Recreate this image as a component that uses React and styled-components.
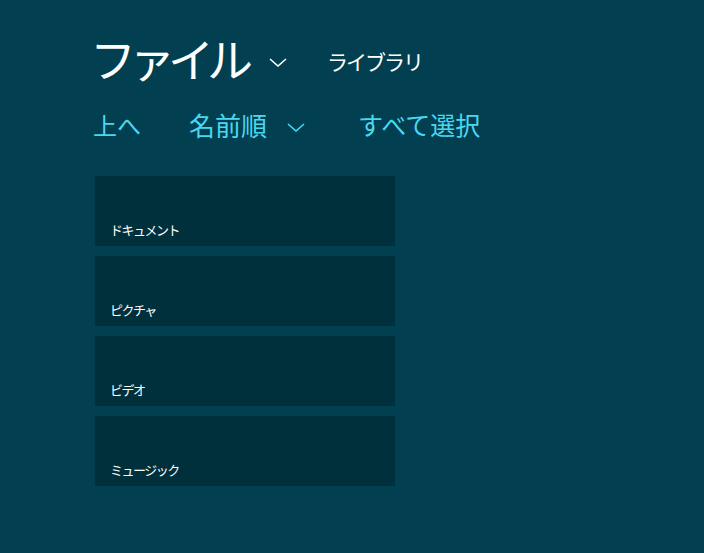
import React from "react";
import styled, { createGlobalStyle } from "styled-components";

const Global = createGlobalStyle`
  html, body { margin: 0; padding: 0; background: #013f51; }
  body { font-family: "Noto Sans CJK JP", "Noto Sans", sans-serif; }
`;

const Page = styled.div`
  width: 704px;
  height: 553px;
  box-sizing: border-box;
  background: #013f51;
  padding: 22px 0 0 93px;
  color: #fff;
`;

const Header = styled.div`
  display: flex;
  align-items: center;
  height: 70px;
`;

const Title = styled.h1`
  margin: 0 0 0 -3px;
  font-size: 46px;
  font-weight: 400;
  letter-spacing: -7px;
  line-height: 1;
  color: #fff;
`;

const Chevron = ({ size = 18, color = "#fff", stroke = 1.6 }) => (
  <svg width={size} height={size / 2} viewBox="0 0 18 9" fill="none">
    <path d="M1 1 L9 8 L17 1" stroke={color} strokeWidth={stroke} />
  </svg>
);

const TitleChevron = styled.span`
  display: flex;
  margin-left: 23px;
  margin-top: 10px;
`;

const Sub = styled.span`
  margin-left: 40px;
  margin-top: 8px;
  font-size: 21px;
  font-weight: 400;
  letter-spacing: -2px;
`;

const Nav = styled.div`
  display: flex;
  align-items: center;
  margin-top: 14px;
  height: 36px;
`;

const NavItem = styled.span`
  display: flex;
  align-items: center;
  font-size: ${(p) => p.$size || 24}px;
  font-weight: 400;
  color: #4bd8ef;
  margin-left: ${(p) => p.$offset || 0}px;
`;

const NavChevron = styled.span`
  display: flex;
  margin-left: 20px;
  margin-top: 6px;
`;

const Tiles = styled.div`
  display: flex;
  flex-direction: column;
  gap: 10px;
  margin-top: 34px;
  margin-left: 2px;
`;

const Tile = styled.div`
  width: 300px;
  height: 70px;
  box-sizing: border-box;
  background: #01303d;
  display: flex;
  align-items: flex-end;
  padding: 0 0 7px 15px;
  font-size: 13px;
  color: #fff;
  letter-spacing: -1.5px;
`;

const tiles = ["ドキュメント", "ピクチャ", "ビデオ", "ミュージック"];

export default function App() {
  return (
    <>
      <Global />
      <Page>
        <Header>
          <Title>ファイル</Title>
          <TitleChevron>
            <Chevron />
          </TitleChevron>
          <Sub>ライブラリ</Sub>
        </Header>
        <Nav>
          <NavItem>上へ</NavItem>
          <NavItem $offset={48} $size={26}>
            名前順
            <NavChevron>
              <Chevron color="#4bd8ef" />
            </NavChevron>
          </NavItem>
          <NavItem $offset={53} $size={25}>すべて選択</NavItem>
        </Nav>
        <Tiles>
          {tiles.map((t) => (
            <Tile key={t}>{t}</Tile>
          ))}
        </Tiles>
      </Page>
    </>
  );
}
